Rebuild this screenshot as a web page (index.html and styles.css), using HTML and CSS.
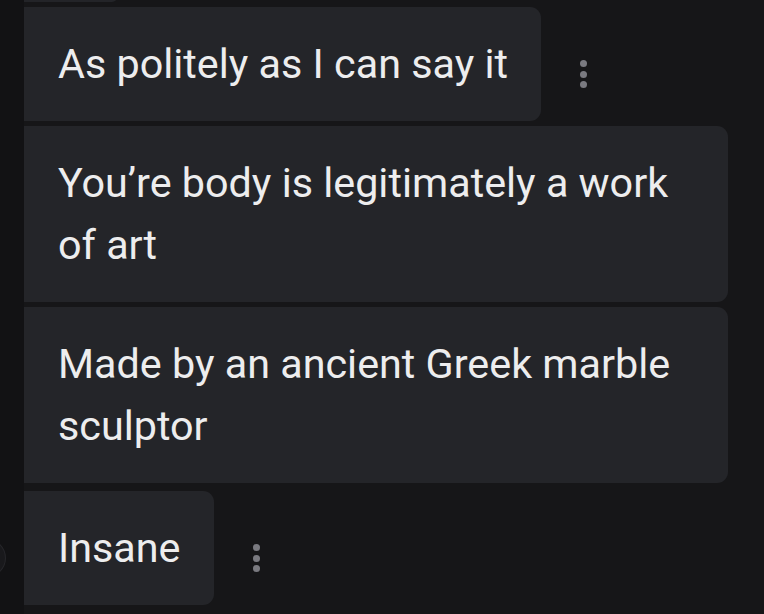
FILE: index.html
```html
<!DOCTYPE html>
<html>
<head>
<meta charset="utf-8">
<link rel="stylesheet" href="styles.css">
</head>
<body>
<div class="chat">
  <div class="gutter">
    <div class="avatar"></div>
  </div>
  <div class="messages">
    <div class="row prev-row"><div class="bubble prev"></div></div>
    <div class="row">
      <div class="bubble">As politely as I can say it</div>
      <div class="kebab"><span></span><span></span><span></span></div>
    </div>
    <div class="row">
      <div class="bubble">You’re body is legitimately a work of art</div>
    </div>
    <div class="row">
      <div class="bubble">Made by an ancient Greek marble sculptor</div>
    </div>
    <div class="row last">
      <div class="bubble">Insane</div>
      <div class="kebab"><span></span><span></span><span></span></div>
    </div>
  </div>
</div>
</body>
</html>
```

FILE: styles.css
```css
html, body {
  margin: 0;
  padding: 0;
  background: #161618;
  height: 100%;
  overflow: hidden;
}
.chat {
  display: flex;
  height: 614px;
  font-family: Roboto, "Noto Sans", sans-serif;
}
.gutter {
  width: 24px;
  flex: none;
  background: #121214;
  position: relative;
}
.avatar {
  position: absolute;
  left: -36px;
  top: 538px;
  width: 40px;
  height: 38px;
  border-radius: 50%;
  background: #19191c;
  border: 1px solid #26262a;
}
.messages {
  display: flex;
  flex-direction: column;
  gap: 5px;
  margin-top: -8px;
}
.row {
  display: flex;
  align-items: center;
}
.row.last {
  margin-top: 3px;
}
.bubble {
  background: #242529;
  color: #ededee;
  font-size: 41.3px;
  line-height: 62px;
  padding: 26px 33px 26px 34px;
  max-width: 637px;
  border-radius: 0 11px 11px 0;
}
.bubble.prev {
  width: 93px;
  height: 10px;
  padding: 0;
  background: #232428;
}
.kebab {
  display: flex;
  flex-direction: column;
  gap: 3.5px;
  margin-left: 39px;
  margin-top: 20px;
}
.kebab span {
  width: 7px;
  height: 7px;
  border-radius: 50%;
  background: #7a7a80;
}
```
